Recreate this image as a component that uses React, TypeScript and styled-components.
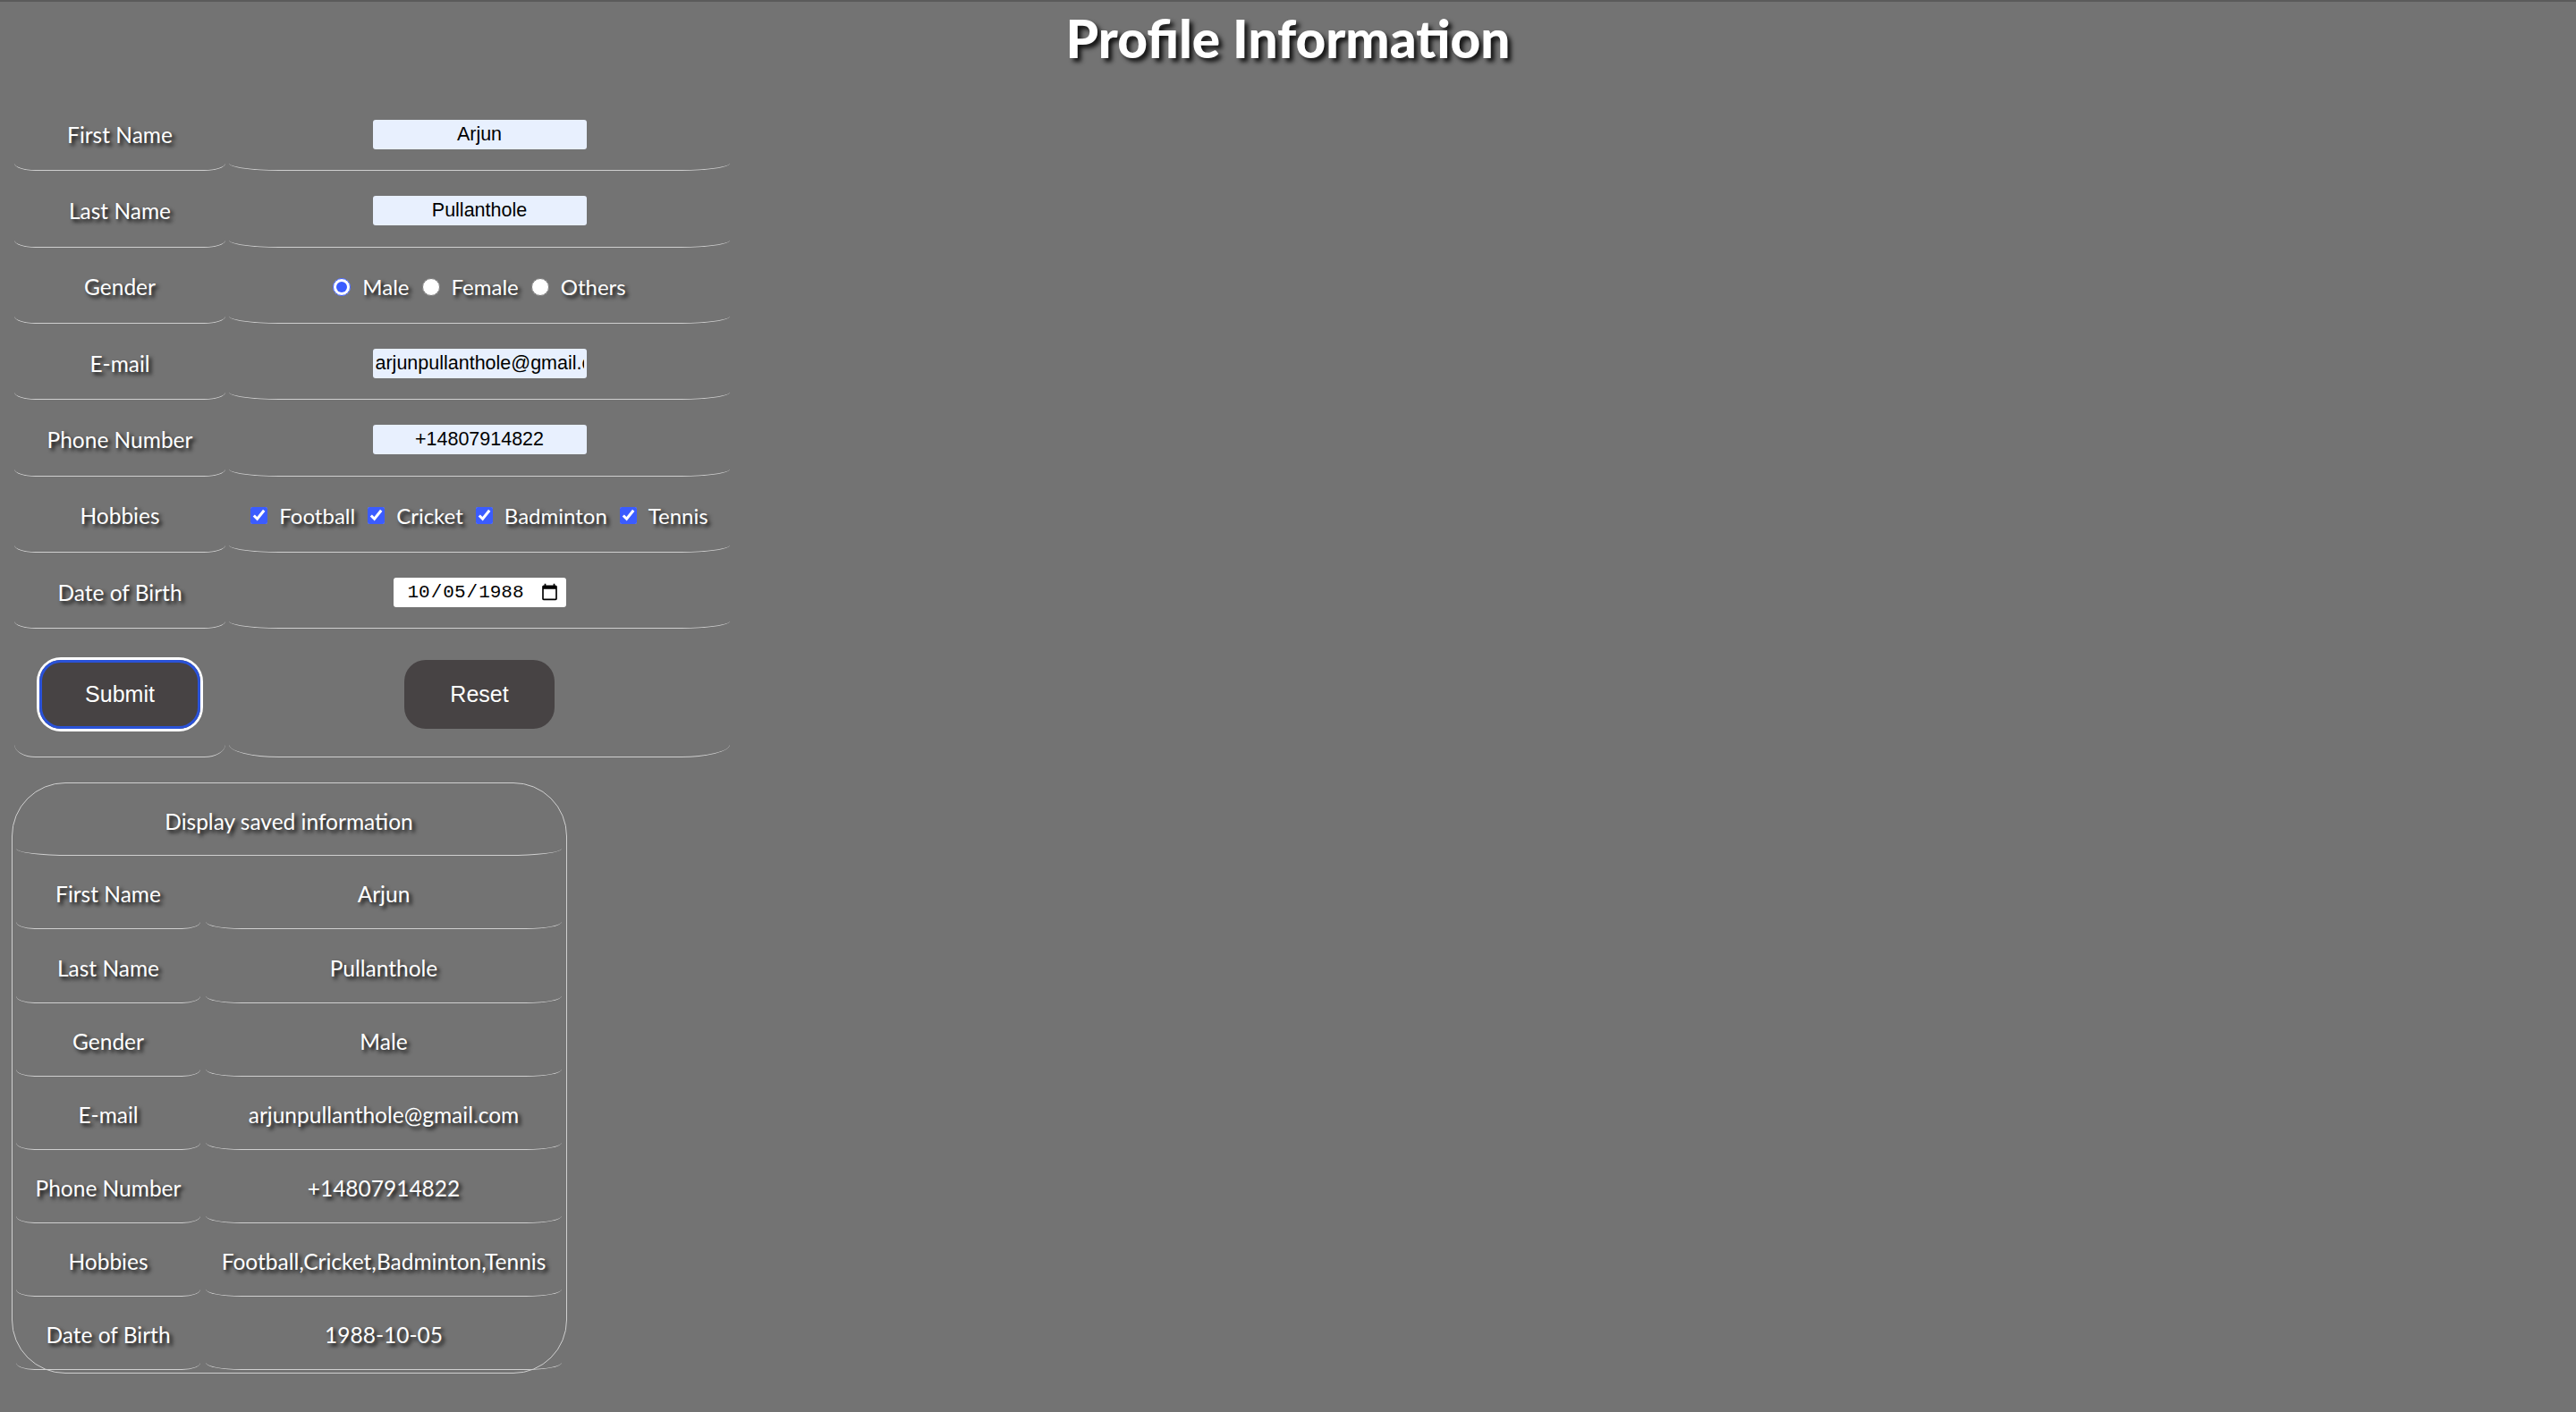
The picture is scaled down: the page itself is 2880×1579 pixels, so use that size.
import React from "react";
import styled, { createGlobalStyle } from "styled-components";

const GlobalStyle = createGlobalStyle`
  html, body {
    margin: 0;
    padding: 0;
    background: #737373;
  }
  body {
    font-family: Lato, "Noto Sans", sans-serif;
    color: #ffffff;
  }
  * { box-sizing: border-box; }
`;

const Page = styled.div`
  min-height: 1579px;
  border-top: 2px solid #5b5b5b;
  padding: 0 16px;
`;

const Title = styled.h1`
  margin: 6px 0 30px;
  text-align: center;
  font-family: Lato, sans-serif;
  font-weight: 900;
  font-size: 58.5px;
  line-height: 68px;
  color: #ffffff;
  text-shadow: 4px 4px 5px rgba(0, 0, 0, 0.85);
`;

const FormGrid = styled.form`
  display: grid;
  grid-template-columns: 236px 560px;
  grid-template-rows: repeat(7, 85.33px) 144px;
  column-gap: 4px;
`;

const Cell = styled.div`
  display: flex;
  align-items: center;
  justify-content: center;
  padding-top: 4px;
  border-bottom: 1px solid #cfcfcf;
  border-radius: 10%;
  font-size: 24.5px;
  color: #ffffff;
  text-shadow: 3px 3px 4px rgba(0, 0, 0, 0.9);
  white-space: nowrap;
`;

const TextInput = styled.input`
  width: 239px;
  height: 33px;
  padding: 2px 3px;
  border: none;
  border-radius: 3px;
  background: #e8f0fe;
  color: #000000;
  font-family: "Liberation Sans", Arial, sans-serif;
  font-size: 21.5px;
  text-align: center;
  outline: none;
`;

const DateInput = styled.input`
  width: 193px;
  height: 33px;
  padding: 0 6px 0 15px;
  border: none;
  border-radius: 3px;
  background: #ffffff;
  color: #000000;
  font-family: "Liberation Mono", "DejaVu Sans Mono", monospace;
  font-size: 21px;
  outline: none;
`;

const OptionGroup = styled.div<{ $size: number }>`
  display: flex;
  align-items: center;
  font-size: ${(p) => p.$size}px;
`;

const Option = styled.label<{ $gap: number }>`
  display: inline-flex;
  align-items: center;
  gap: ${(p) => p.$gap}px;
  margin-right: 14px;
  &:last-child { margin-right: 0; }
`;

const Radio = styled.input`
  width: 20px;
  height: 20px;
  margin: 0;
  accent-color: #3b5cff;
`;

const Check = styled.input`
  width: 19px;
  height: 19px;
  margin: 0;
  accent-color: #3b5cff;
`;

const Button = styled.button<{ $focused?: boolean }>`
  height: 77px;
  padding: 0 51px;
  border: none;
  border-radius: 24px;
  background: #474344;
  color: #ffffff;
  font-family: "Liberation Sans", Arial, sans-serif;
  font-size: 25px;
  cursor: pointer;
  box-shadow: ${(p) =>
    p.$focused ? "inset 0 0 0 3px #2a52d8, 0 0 0 3px #ffffff" : "none"};
`;

const DisplayBox = styled.section`
  width: 621px;
  margin: 28px 0 0 -3px;
  padding: 1px 5px 3px 4px;
  border: 1px solid #cfcfcf;
  border-radius: 60px;
`;

const DisplayGrid = styled.div`
  display: grid;
  grid-template-columns: 206px 398px;
  grid-template-rows: 80px repeat(7, 82.15px);
  column-gap: 6px;
`;

const DisplayHeader = styled(Cell)`
  grid-column: 1 / span 2;
`;

const fields = [
  ["First Name", "Arjun"],
  ["Last Name", "Pullanthole"],
  ["Gender", "Male"],
  ["E-mail", "arjunpullanthole@gmail.com"],
  ["Phone Number", "+14807914822"],
  ["Hobbies", "Football,Cricket,Badminton,Tennis"],
  ["Date of Birth", "1988-10-05"],
];

const hobbies = ["Football", "Cricket", "Badminton", "Tennis"];

export default function App() {
  return (
    <>
      <GlobalStyle />
      <Page>
        <Title>Profile Information</Title>
        <FormGrid onSubmit={(e) => e.preventDefault()}>
          <Cell>First Name</Cell>
          <Cell>
            <TextInput type="text" defaultValue="Arjun" />
          </Cell>
          <Cell>Last Name</Cell>
          <Cell>
            <TextInput type="text" defaultValue="Pullanthole" />
          </Cell>
          <Cell>Gender</Cell>
          <Cell>
            <OptionGroup $size={24}>
              <Option $gap={13}>
                <Radio type="radio" name="gender" defaultChecked />
                Male
              </Option>
              <Option $gap={13}>
                <Radio type="radio" name="gender" />
                Female
              </Option>
              <Option $gap={13}>
                <Radio type="radio" name="gender" />
                Others
              </Option>
            </OptionGroup>
          </Cell>
          <Cell>E-mail</Cell>
          <Cell>
            <TextInput type="text" defaultValue="arjunpullanthole@gmail.com" />
          </Cell>
          <Cell>Phone Number</Cell>
          <Cell>
            <TextInput type="text" defaultValue="+14807914822" />
          </Cell>
          <Cell>Hobbies</Cell>
          <Cell>
            <OptionGroup $size={24}>
              {hobbies.map((h) => (
                <Option key={h} $gap={13}>
                  <Check type="checkbox" defaultChecked />
                  {h}
                </Option>
              ))}
            </OptionGroup>
          </Cell>
          <Cell>Date of Birth</Cell>
          <Cell>
            <DateInput type="date" defaultValue="1988-10-05" />
          </Cell>
          <Cell>
            <Button type="submit" $focused>
              Submit
            </Button>
          </Cell>
          <Cell>
            <Button type="reset">Reset</Button>
          </Cell>
        </FormGrid>

        <DisplayBox>
          <DisplayGrid>
            <DisplayHeader>Display saved information</DisplayHeader>
            {fields.map(([k, v]) => (
              <React.Fragment key={k}>
                <Cell>{k}</Cell>
                <Cell>{v}</Cell>
              </React.Fragment>
            ))}
          </DisplayGrid>
        </DisplayBox>
      </Page>
    </>
  );
}
